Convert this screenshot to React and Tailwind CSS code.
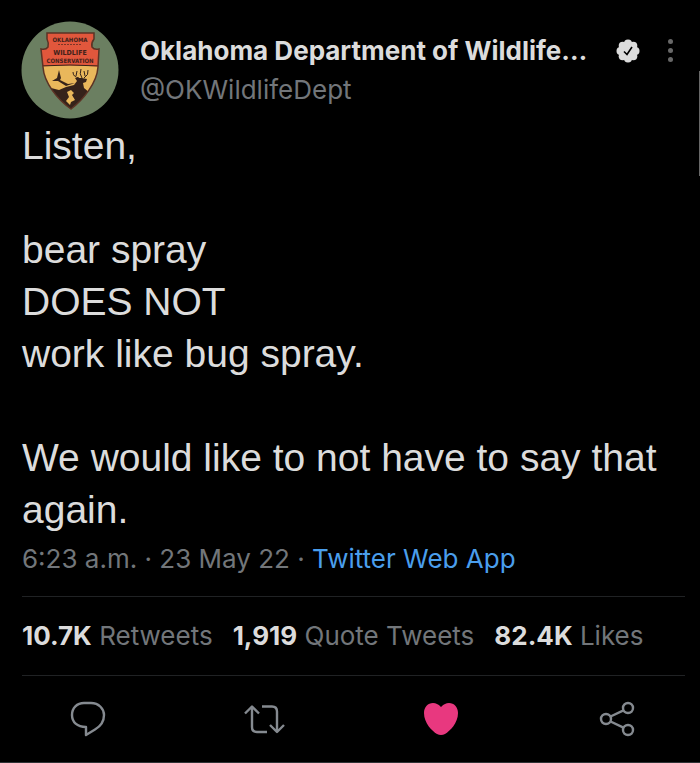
const actions = [
  {
    label: 'Reply',
    icon: (
      <path d="M16 4 H23 C31 4 36 10 36 16 C36 23 33 27 27 30.500 L18 36 V28 C9 28 4 23 4 16 C4 9 9 4 16 4 Z" />
    ),
  },
  {
    label: 'Retweet',
    icon: (
      <>
        <path d="M1 14.500 L8 7.500 L15 14.500 M8 7.500 V28 Q8 33 13 33 H23" />
        <path d="M18 7.500 H28 Q33 7.500 33 12.500 V33 M26 26 L33 33 L40 26" />
      </>
    ),
  },
  {
    label: 'Like',
    icon: (
      <path
        fill="#e8387f"
        stroke="none"
        d="M20 8 C23 5 25 4 28 4 C33 4 37 8 37 14 C37 24 29 32 24 35 Q20 37 16 35 C11 32 3 24 3 14 C3 8 7 4 12 4 C15 4 17 5 20 8 Z"
      />
    ),
  },
  {
    label: 'Share',
    icon: (
      <>
        <circle cx="9" cy="20" r="5" />
        <circle cx="31" cy="9" r="5" />
        <circle cx="31" cy="31" r="5" />
        <path d="M13.500 17.500 L26.500 11.300 M13.500 22.500 L26.500 28.700" />
      </>
    ),
  },
];

const stats = [
  { value: '10.7K', label: 'Retweets' },
  { value: '1,919', label: 'Quote Tweets' },
  { value: '82.4K', label: 'Likes' },
];

const shieldOutline =
  'M26 12 H73 V18 Q70 22 71 26 Q73 29 78 28 L77 46 C76 62 62 79 50 88 C37 79 23 62 22 46 L20 28 Q25 29 27 26 Q28 22 26 18 Z';

function Avatar() {
  return (
    <svg viewBox="0 0 98 98" className="size-[98px] shrink-0" role="img" aria-label="Oklahoma Wildlife Conservation">
      <circle cx="49" cy="49" r="48.500" fill="#6b7f61" />
      <clipPath id="shield">
        <path d={shieldOutline} />
      </clipPath>
      <g clipPath="url(#shield)">
        <rect x="15" y="10" width="66" height="80" fill="#e1573c" />
        <path d="M15 46 Q49 43 82 46 V90 H15 Z" fill="#e9b75b" />
        <path d="M18 68 L30 67 L38 69 L45 66 L53 64 L56 60 L54 57 L58 57 L61 57 L66 58 L65 61 L62 62 L63 67 L69 72 L80 90 H18 Z" fill="#35221a" />
        <path d="M46 71 L50 69 L53 72 L51 74 L54 79 L50 81 L49 84 L45 80 L48 76 Z" fill="#e9b75b" />
        <path d="M38 49 L40 57 L39 59 L47 63 L54 62 L45 65 L37 60 L31 60 L36 57 Z" fill="#35221a" />
        <path d="M58 57 Q52 56 52 51 M55 55 L56 50 M61 57 Q58 53 60 48 M63 57 Q68 54 67 49 M64 55 L63 50" fill="none" stroke="#35221a" strokeWidth="1" />
        <path d="M18 45 Q49 43 80 45" fill="none" stroke="#35221a" strokeWidth="1" />
      </g>
      <path d={shieldOutline} fill="none" stroke="#5b3325" strokeWidth="1.500" />
      <path d="M37 23.500 H61" stroke="#7d3527" strokeWidth="1" strokeDasharray="2 1" />
      <g fill="#42211a" textAnchor="middle" className="font-['Liberation_Sans_Narrow','DejaVu_Sans_Condensed',sans-serif] font-bold">
        <text x="49" y="21" fontSize="6">OKLAHOMA</text>
        <text x="49" y="34" fontSize="7">WILDLIFE</text>
        <text x="49" y="42" fontSize="6">CONSERVATION</text>
      </g>
    </svg>
  );
}

function VerifiedBadge() {
  return (
    <svg viewBox="0 0 24 24" className="size-6 shrink-0" role="img" aria-label="Verified account">
      <g fill="#dcdcdc">
        <circle cx="12" cy="12" r="9" />
        <circle cx="12" cy="4.500" r="4" />
        <circle cx="17.300" cy="6.700" r="4" />
        <circle cx="19.500" cy="12" r="4" />
        <circle cx="17.300" cy="17.300" r="4" />
        <circle cx="12" cy="19.500" r="4" />
        <circle cx="6.700" cy="17.300" r="4" />
        <circle cx="4.500" cy="12" r="4" />
        <circle cx="6.700" cy="6.700" r="4" />
      </g>
      <path d="M8 12.500 L11 15.500 L16 8" fill="none" stroke="#000" strokeWidth="1.600" />
    </svg>
  );
}

export default function App() {
  return (
    <main className="relative bg-black font-['Inter','Liberation_Sans',sans-serif] text-[#dcdcdc]">
      <article className="border-b border-[#2f3336] pt-[21px]">
        <header className="flex h-[99px] pr-[22px] pl-[21px]">
          <Avatar />
          <div className="ml-[21px] min-w-0 flex-1 pt-[10px]">
            <div className="flex h-[39px] items-center">
              <h1 className="truncate text-[26px] leading-[39px] font-bold">Oklahoma Department of Wildlife…</h1>
              <div className="ml-auto flex items-center gap-[22px]">
                <VerifiedBadge />
                <button type="button" aria-label="More options" className="flex w-4 flex-col items-center gap-1">
                  <span className="size-[5px] rounded-full bg-[#686868]" />
                  <span className="size-[5px] rounded-full bg-[#686868]" />
                  <span className="size-[5px] rounded-full bg-[#686868]" />
                </button>
              </div>
            </div>
            <a href="#profile" className="block text-[26px] leading-[39px] text-[#72767a]">@OKWildlifeDept</a>
          </div>
        </header>
        <div className="pr-[15px] pl-[22px]">
          <p className="font-['Liberation_Sans',Arial,sans-serif] text-[39px] leading-[52px] whitespace-pre-line">
            {'Listen,\n\nbear spray\nDOES NOT\nwork like bug spray.\n\nWe would like to not have to say that again.'}
          </p>
          <p className="mt-[5px] pb-[19px] text-[26px] leading-9 text-[#72767a]">
            6:23 a.m. · 23 May 22 · <a href="#source" className="text-[#4a9eec]">Twitter Web App</a>
          </p>
          <div className="flex h-20 items-center gap-5 border-y border-[#202224] text-[26px] leading-9 whitespace-nowrap">
            {stats.map((stat) => (
              <a key={stat.label} href="#stats" className="text-[#72767a]">
                <strong className="font-bold text-[#dcdcdc]">{stat.value}</strong> {stat.label}
              </a>
            ))}
          </div>
        </div>
        <div className="flex h-[86px] items-center justify-between pr-[63px] pl-[68px]">
          {actions.map((action) => (
            <button key={action.label} type="button" aria-label={action.label}>
              <svg viewBox="0 0 40 40" className="size-10 overflow-visible" fill="none" stroke="#858a90" strokeWidth="2.400" strokeLinejoin="round">
                {action.icon}
              </svg>
            </button>
          ))}
        </div>
      </article>
      <div className="absolute top-[71px] right-0 h-[105px] w-px bg-[#686868]" />
    </main>
  );
}
